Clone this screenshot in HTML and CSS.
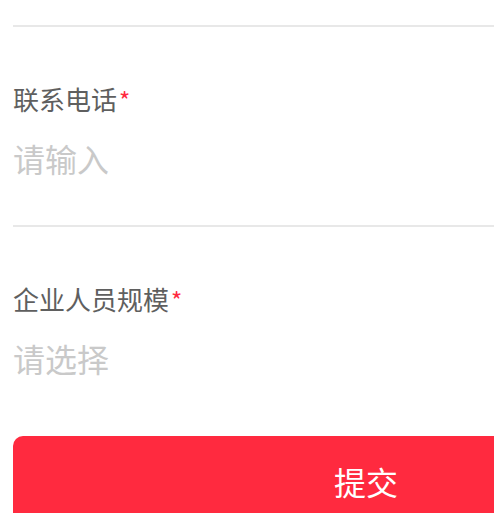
FILE: index.html
```html
<!DOCTYPE html>
<html lang="zh">
<head>
<meta charset="utf-8">
<link rel="stylesheet" href="styles.css">
</head>
<body>
<div class="form">
  <div class="item item-prev"></div>
  <div class="item">
    <div class="label">联系电话<span class="req">*</span></div>
    <div class="field">请输入</div>
  </div>
  <div class="item item-last">
    <div class="label">企业人员规模<span class="req">*</span></div>
    <div class="field">请选择</div>
  </div>
  <button class="submit" type="button">提交</button>
</div>
</body>
</html>
```
FILE: styles.css
```css
html, body {
  margin: 0;
  padding: 0;
  overflow: hidden;
  background: #ffffff;
}
body {
  font-family: "Noto Sans CJK SC", "Noto Sans", sans-serif;
}
.form {
  width: 706px;
  padding-left: 13px;
  display: flex;
  flex-direction: column;
}
.item {
  display: flex;
  flex-direction: column;
  padding: 54px 0 45px;
  border-bottom: 2px solid #e8e8e8;
}
.item-prev {
  padding: 0;
  height: 25px;
}
.item-last {
  border-bottom: none;
}
.label {
  font-size: 26px;
  line-height: 36px;
  height: 36px;
  color: #5f5f5f;
  margin-bottom: 19px;
}
.req {
  color: #ff2a3f;
  font-size: 24px;
  margin-left: 2px;
}
.field {
  height: 44px;
  font-size: 32px;
  line-height: 44px;
  color: #c9c9c9;
}
.submit {
  margin-top: 11px;
  height: 90px;
  border: none;
  border-radius: 10px;
  background: #ff2a3f;
  color: #ffffff;
  font-family: inherit;
  font-size: 32px;
  padding: 0;
}
```
